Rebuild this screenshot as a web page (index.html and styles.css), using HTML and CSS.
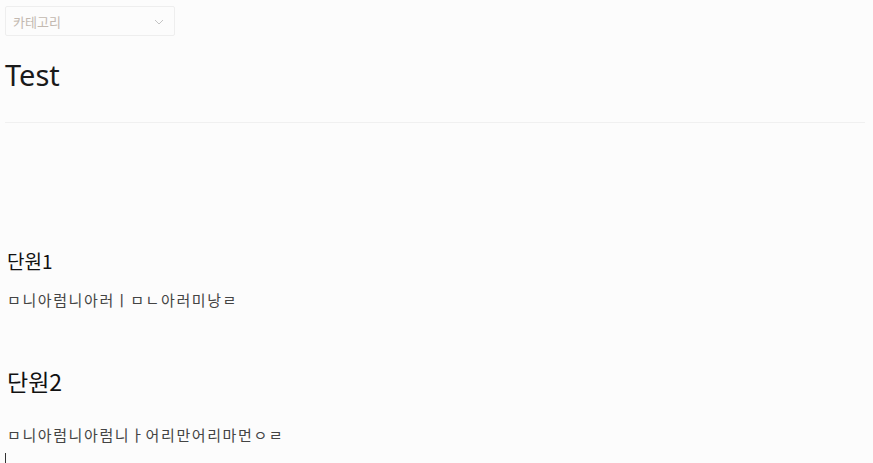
FILE: index.html
```html
<!DOCTYPE html>
<html lang="ko">
<head>
    <meta charset="UTF-8">
    <meta name="viewport" content="width=device-width, initial-scale=1.0">
    <title>Test</title>
    <link rel="stylesheet" href="styles.css">
</head>
<body>
    <div class="post">
        <div class="category">
            <span>카테고리</span>
            <svg class="chevron" width="10" height="6" viewBox="0 0 10 6">
                <path d="M1 1 L5 5 L9 1" fill="none" stroke="#c4c4c4" stroke-width="1"/>
            </svg>
        </div>
        <h1 class="title">Test</h1>
        <div class="content">
            <h3 class="unit">단원1</h3>
            <p class="text">ㅁ니아럼니아러ㅣㅁㄴ아러미낭ㄹ</p>
            <h2 class="unit2">단원2</h2>
            <p class="text text2">ㅁ니아럼니아럼니ㅏ어리만어리마먼ㅇㄹ</p>
            <p class="caret"></p>
        </div>
    </div>
</body>
</html>
```

FILE: styles.css
```css
body {
    margin: 0;
    background-color: #fcfcfc;
    font-family: "Noto Sans", "Noto Sans CJK KR", sans-serif;
    color: #222;
}

.post {
    padding: 6px 8px 0 5px;
}

.category {
    width: 170px;
    height: 30px;
    box-sizing: border-box;
    border: 1px solid #eeeeee;
    border-radius: 2px;
    display: flex;
    align-items: center;
    justify-content: space-between;
    padding: 0 10px 0 7px;
    font-size: 13px;
    color: #c3b9b0;
}

.chevron {
    margin-top: 2px;
}

.title {
    font-weight: 400;
    font-size: 29px;
    margin: 19px 0 0 0;
    line-height: 40px;
    color: #1a1a1a;
    padding-bottom: 27px;
    border-bottom: 1px solid #f0f0f0;
}

.content {
    padding-top: 124px;
    font-family: "Noto Sans CJK KR", sans-serif;
}

.unit {
    font-size: 19px;
    font-weight: 400;
    margin: 0 0 0 2px;
    line-height: 28px;
    color: #111;
}

.unit2 {
    font-size: 23px;
    font-weight: 400;
    margin: 54px 0 0 2px;
    line-height: 32px;
    color: #111;
}

.text {
    font-size: 15px;
    letter-spacing: 1.6px;
    margin: 14px 0 0 2px;
    line-height: 22px;
    color: #444;
}

.text2 {
    margin-top: 27px;
}

.caret {
    margin: 7px 0 0 0;
    width: 1px;
    height: 10px;
    background: #333;
}
```
